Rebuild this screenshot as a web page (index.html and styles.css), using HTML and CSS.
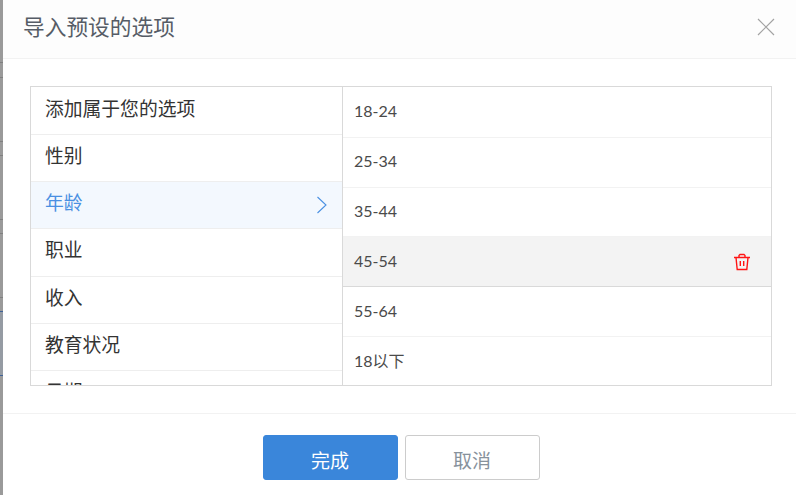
FILE: index.html
```html
<!DOCTYPE html>
<html lang="zh-CN">
<head>
<meta charset="utf-8">
<title>导入预设的选项</title>
<link rel="stylesheet" href="styles.css">
</head>
<body>
<div class="backdrop"></div>
<div class="dialog">
  <header class="head">
    <h1>导入预设的选项</h1>
    <svg class="close" width="20" height="20" viewBox="0 0 20 20"><path d="M2 2 18 18M18 2 2 18" stroke="#a3a3a3" stroke-width="1.2" fill="none"/></svg>
  </header>
  <main class="body">
    <div class="panel">
      <ul class="cats">
        <li>添加属于您的选项</li>
        <li>性别</li>
        <li class="on">年龄<svg width="12" height="18" viewBox="0 0 12 18"><path d="M1.5 1 10 9 1.5 17" stroke="#4a90e2" stroke-width="1.1" fill="none"/></svg></li>
        <li>职业</li>
        <li>收入</li>
        <li>教育状况</li>
        <li>日期</li>
      </ul>
      <ul class="opts">
        <li>18-24</li>
        <li>25-34</li>
        <li>35-44</li>
        <li class="hover">45-54<svg width="18" height="18" viewBox="0 0 18 18"><path d="M1 4.500H17M6 4.500V2.500L7 1.500H11L12 2.500V4.500M3 4.500 4.200 16.500H13.800L15 4.500M7.300 8V13M10.700 8V13" stroke="#ff1414" stroke-width="1.4" fill="none"/></svg></li>
        <li>55-64</li>
        <li>18以下</li>
      </ul>
    </div>
  </main>
  <footer class="foot">
    <button class="btn primary">完成</button>
    <button class="btn">取消</button>
  </footer>
</div>
</body>
</html>
```
FILE: styles.css
```css
* { box-sizing: border-box; }
html, body { margin: 0; height: 100%; overflow: hidden; }
body { display: flex; background: #fff; font-family: "Noto Sans CJK SC", sans-serif; }
.backdrop {
  width: 3px;
  flex: none;
  background: linear-gradient(to bottom,
    #9a9a9a 0 62px, #808080 62px 63px,
    #9a9a9a 63px 77px, #808080 77px 78px,
    #9a9a9a 78px 141px, #808080 141px 142px,
    #9a9a9a 142px 155px, #808080 155px 156px,
    #9a9a9a 156px 219px, #808080 219px 220px,
    #9a9a9a 220px 233px, #808080 233px 234px,
    #9a9a9a 234px 297px, #808080 297px 298px,
    #9a9a9a 298px 311px, #3f6297 311px 312px,
    #959ba3 312px 375px, #3f6297 375px 376px,
    #9a9a9a 376px);
}
.dialog { flex: 1; display: flex; flex-direction: column; background: #fff; }
.head { height: 59px; flex: none; display: flex; align-items: center; justify-content: space-between; padding: 0 20px 4px 20px; background: #fdfdfd; border-bottom: 1px solid #f2f2f2; }
h1 { margin: 0 0 4px; font-size: 21.7px; font-weight: 400; color: #565c66; }
.body { height: 355px; flex: none; padding: 27px 24px 28px 27px; border-bottom: 1px solid #f2f2f2; }
.panel { height: 300px; display: flex; border: 1px solid #d9d9d9; overflow: hidden; }
ul { list-style: none; margin: 0; padding: 0; }
.cats { width: 312px; flex: none; padding-top: 0.8px; border-right: 1px solid #d9d9d9; }
.cats li { height: 47.2px; padding: 0 14px 7px; display: flex; align-items: center; justify-content: space-between; font-size: 18.8px; color: #333; border-bottom: 1px solid #eee; }
.cats li.on { color: #4a90e2; background: #f3f8fe; }
.cats li svg { margin-top: 7px; }
.opts { flex: 1; padding-top: 1px; font-family: Lato, "Noto Sans CJK SC", sans-serif; }
.opts li { height: 49.8px; padding: 0 20px 3px 11px; display: flex; align-items: center; justify-content: space-between; font-size: 16px; color: #4a4a4a; border-bottom: 1px solid #f2f2f2; }
.opts li svg { margin-top: 3px; }
.opts li.hover { background: #f3f3f3; border-bottom-color: #d9d9d9; }
.foot { flex: 1; display: flex; justify-content: center; gap: 7px; padding: 21px 0 0 3px; }
.btn { width: 135px; height: 45px; border: 1px solid #ccc; border-radius: 3px; background: #fff; color: #87929c; font: inherit; font-size: 19px; padding: 3px 0 0; }
.btn.primary { background: #3a86da; border-color: #3a86da; color: #fff; }
```
